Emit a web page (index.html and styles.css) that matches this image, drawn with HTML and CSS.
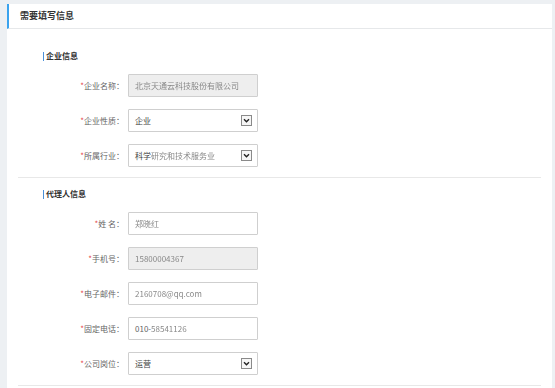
FILE: index.html
```html
<!DOCTYPE html>
<html lang="zh-CN">
<head>
    <meta charset="UTF-8">
    <title>需要填写信息</title>
    <link rel="stylesheet" href="styles.css">
</head>
<body>
    <div class="panel">
        <div class="panelHead">需要填写信息</div>
        <div class="panelBody">

            <div class="section">
                <h3 class="sectionTitle">企业信息</h3>
                <div class="formRow">
                    <label class="formLabel"><i>*</i>企业名称：</label>
                    <div class="field disabled"><span class="masked">北京天通云科技股份有限公司</span></div>
                </div>
                <div class="formRow">
                    <label class="formLabel"><i>*</i>企业性质：</label>
                    <div class="field selectField">
                        <span class="value">企业</span>
                        <svg class="arrow" width="11" height="11" viewBox="0 0 11 11"><rect x="0.5" y="0.5" width="10" height="10" fill="#f6f6f6" stroke="#8a8a8a"/><path d="M3 4.3 L5.5 6.8 L8 4.3" fill="none" stroke="#222" stroke-width="1.4"/></svg>
                    </div>
                </div>
                <div class="formRow">
                    <label class="formLabel"><i>*</i>所属行业：</label>
                    <div class="field selectField">
                        <span class="value">科学<span class="masked">研究和技术服务业</span></span>
                        <svg class="arrow" width="11" height="11" viewBox="0 0 11 11"><rect x="0.5" y="0.5" width="10" height="10" fill="#f6f6f6" stroke="#8a8a8a"/><path d="M3 4.3 L5.5 6.8 L8 4.3" fill="none" stroke="#222" stroke-width="1.4"/></svg>
                    </div>
                </div>
            </div>

            <div class="section">
                <h3 class="sectionTitle">代理人信息</h3>
                <div class="formRow">
                    <label class="formLabel"><i>*</i>姓&nbsp;名：</label>
                    <div class="field"><span class="masked">郑晓红</span></div>
                </div>
                <div class="formRow">
                    <label class="formLabel"><i>*</i>手机号：</label>
                    <div class="field disabled"><span class="masked">15800004367</span></div>
                </div>
                <div class="formRow">
                    <label class="formLabel"><i>*</i>电子邮件：</label>
                    <div class="field"><span class="masked">2160708@qq.com</span></div>
                </div>
                <div class="formRow">
                    <label class="formLabel"><i>*</i>固定电话：</label>
                    <div class="field"><span class="value">010-<span class="masked">58541126</span></span></div>
                </div>
                <div class="formRow">
                    <label class="formLabel"><i>*</i>公司岗位：</label>
                    <div class="field selectField">
                        <span class="value">运营</span>
                        <svg class="arrow" width="11" height="11" viewBox="0 0 11 11"><rect x="0.5" y="0.5" width="10" height="10" fill="#f6f6f6" stroke="#8a8a8a"/><path d="M3 4.3 L5.5 6.8 L8 4.3" fill="none" stroke="#222" stroke-width="1.4"/></svg>
                    </div>
                </div>
            </div>

        </div>
    </div>
</body>
</html>
```

FILE: styles.css
```css
body {
    margin: 0;
    padding: 4px 3px 0 7px;
    background-color: #edf0f3;
    font-family: "Noto Sans CJK SC", "Noto Sans", sans-serif;
    font-size: 8px;
    color: #555;
}

.panel {
    background-color: #fff;
    min-height: 384px;
}

.panelHead {
    height: 24px;
    line-height: 24px;
    padding-left: 11px;
    border-left: 2px solid #3aa3ee;
    border-bottom: 1px solid #e6e8ea;
    font-size: 9px;
    font-weight: bold;
    color: #333;
}

.panelBody {
    padding: 11px 11px 0 11px;
}

.section {
    padding: 10px 0 10px 25px;
    border-bottom: 1px solid #e8e8e8;
}

.sectionTitle {
    margin: 0 0 12px 0;
    height: 12px;
    line-height: 12px;
    font-size: 8px;
    font-weight: bold;
    color: #333;
    display: flex;
    align-items: center;
}

.sectionTitle::before {
    content: "";
    width: 1px;
    height: 9px;
    background-color: #4a90d9;
    margin-right: 2px;
}

.formRow {
    display: flex;
    align-items: center;
    margin-bottom: 12px;
}

.formRow:last-child {
    margin-bottom: 0;
}

.formLabel {
    width: 81px;
    margin-right: 4px;
    text-align: right;
    color: #666;
}

.formLabel i {
    font-style: normal;
    color: #e5484d;
}

.field {
    box-sizing: border-box;
    width: 130px;
    height: 23px;
    padding: 0 5px 0 6px;
    border: 1px solid #cfcfcf;
    border-radius: 1px;
    display: flex;
    align-items: center;
    color: #666;
    white-space: nowrap;
    overflow: hidden;
}

.field.disabled {
    background-color: #eeeeee;
}

.selectField {
    justify-content: space-between;
}

.selectField .value {
    color: #444;
}

.masked {
    display: inline-block;
    color: #888;
    filter: blur(0.6px);
}

.arrow {
    flex-shrink: 0;
}
```
